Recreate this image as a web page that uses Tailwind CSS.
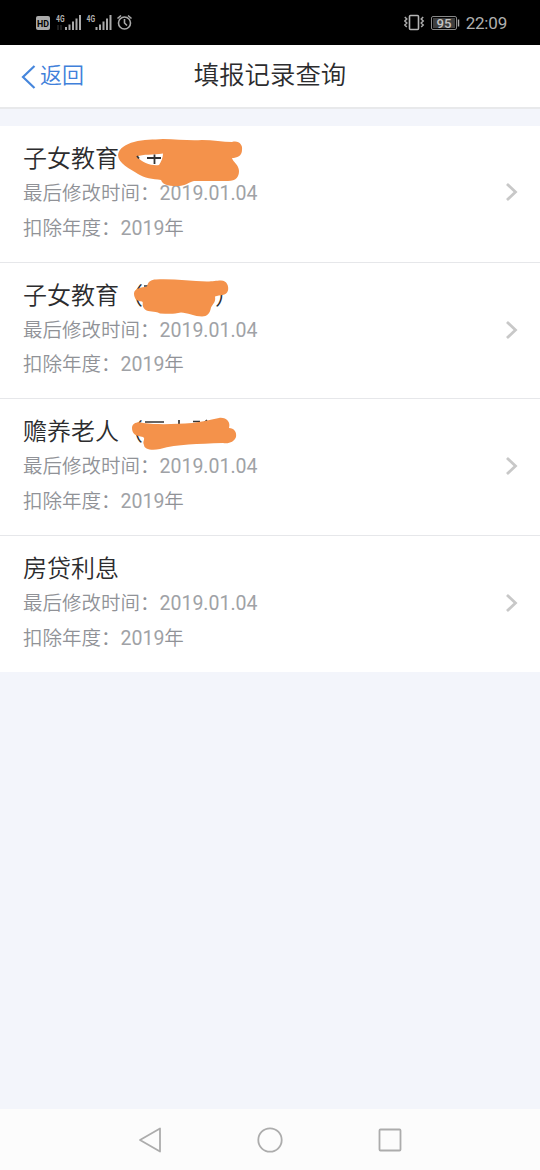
<!DOCTYPE html>
<html lang="zh-CN">
<head>
<meta charset="utf-8">
<title>填报记录查询</title>
<script src="https://cdn.jsdelivr.net/npm/@tailwindcss/browser@4"></script>
</head>
<body class="w-[540px] h-[1170px] overflow-hidden flex flex-col bg-[#f3f5fb] font-['Roboto','Noto_Sans_CJK_SC',sans-serif] text-[#2c2c2e]">
<div class="h-[45px] shrink-0 bg-black flex items-center justify-between pl-[35px] pr-[33px] text-[#b0b0b0]">
  <svg class="w-[100px] h-[45px]" viewBox="35 0 100 45" fill="none">
    <rect x="36" y="16" width="14" height="14" rx="2" fill="#aaa"/>
    <text x="37" y="26.600" font-size="9.500" font-weight="700" fill="#000" textLength="12" lengthAdjust="spacingAndGlyphs">HD</text>
    <text x="56" y="22" font-size="9.500" font-weight="700" fill="#b4b4b4" textLength="8.500" lengthAdjust="spacingAndGlyphs">4G</text>
    <path d="M58 25v5M61 25v5" stroke="#333" stroke-width="1.200"/>
    <path d="M66 27v3M69.500 24.500V30M73 21.500V30M76.500 18.500V30M80 15V30" stroke="#aaa" stroke-width="2"/>
    <text x="86.500" y="22" font-size="9.500" font-weight="700" fill="#b4b4b4" textLength="8.500" lengthAdjust="spacingAndGlyphs">4G</text>
    <path d="M96.500 27v3M100 24.500V30M103.500 21.500V30M107 18.500V30M110.500 15V30" stroke="#aaa" stroke-width="2"/>
    <g stroke="#aaa" stroke-width="1.600"><circle cx="124.500" cy="23" r="6"/><path d="M124.500 19v4l2.500 2.500M117.500 18.500l3.500-3M131.500 18.500l-3.500-3"/></g>
  </svg>
  <div class="flex items-center gap-[5px]">
    <svg class="w-[57px] h-[45px]" viewBox="404 0 57 45" fill="none">
      <rect x="409.500" y="15.500" width="9" height="14" rx="1" stroke="#b4b4b4" stroke-width="1.600"/>
      <path d="M404.800 17l2 2-2 2 2 2-2 2 2 2M423.200 17l-2 2 2 2-2 2 2 2-2 2" stroke="#aaa" stroke-width="1.500"/>
      <rect x="431.500" y="16.500" width="25" height="13" rx="1.500" stroke="#888"/>
      <rect x="433" y="18" width="22" height="10" fill="#3e3e3e"/>
      <path d="M458.500 19.500v7" stroke="#aaa" stroke-width="1.500"/>
      <text x="436.500" y="27.500" font-size="12.500" font-weight="500" fill="#c4c4c4" textLength="15" lengthAdjust="spacingAndGlyphs">95</text>
    </svg>
    <span class="text-[17px] leading-none tracking-[-0.2px] pt-px">22:09</span>
  </div>
</div>
<header class="h-[64px] shrink-0 bg-white border-b-2 border-[#e8e9eb] grid grid-cols-[1fr_auto_1fr] items-center">
  <div class="flex items-center pl-[21px] gap-1 text-[#4080da] text-[22px] font-[350]">
    <svg class="w-[15px] h-[25px]" viewBox="0 0 15 25" fill="none" stroke="#4686dc" stroke-width="2.200"><path d="M13.500 2L2 13L13.500 24"/></svg>
    <span class="leading-none">返回</span>
  </div>
  <h1 class="text-[25.400px] leading-none font-[350]">填报记录查询</h1>
</header>
<main class="mt-[17px] shrink-0 bg-white">
  <section class="relative h-[136.500px] border-b border-[#e6e7ea] flex items-center justify-between pl-[23px] pr-[22px]">
    <div><h2 class="text-[24px] leading-[36px] font-[350]">子女教育</h2><p class="text-[19.500px] leading-[34.500px] text-[#909297] font-[350]">最后修改时间：<span class="font-normal text-[#a0a2a6]">2019.01.04</span></p><p class="text-[19.500px] leading-[34.500px] text-[#909297] font-[350]">扣除年度：<span class="font-normal text-[#a0a2a6]">2019</span>年</p></div>
    <svg class="w-[13px] h-[20px] mb-[3px]" viewBox="0 0 13 20" fill="none" stroke="#c8c8c8" stroke-width="2.800"><path d="M2 2l8.500 8L2 18"/></svg>
    <svg class="absolute left-0 top-0 w-[270px] h-[136px]" viewBox="0 126 270 136" fill="none">
      <path fill="#f4924b" fill-rule="evenodd" d="M118 155C119 148 126 144 134 142C144 139 153 140 163 139C177 139 189 141 202 140C213 140 223 142 232 142C239 140 243 145 242 150C242 156 237 158 232 158C233 162 239 165 239 171C239 177 236 181 228 181H194C189 182 185 186 179 186C171 186 163 186 161 180C153 179 144 178 138 174C130 169 118 163 118 155ZM137 156.500C143 154 153 155 163 153.500C163 158 161 162 159 165C152 166 142 163 137 156.500Z"/>
      <path d="M147 158h14M154.500 154.500v9.500M137 156l2 2.500" stroke="#333" stroke-width="1.800"/>
    </svg>
  </section>
  <section class="relative h-[136.500px] border-b border-[#e6e7ea] flex items-center justify-between pl-[23px] pr-[22px]">
    <div><h2 class="text-[24px] leading-[36px] font-[350]">子女教育（<span class="inline-block w-[72px]"></span>）</h2><p class="text-[19.500px] leading-[34.500px] text-[#909297] font-[350]">最后修改时间：<span class="font-normal text-[#a0a2a6]">2019.01.04</span></p><p class="text-[19.500px] leading-[34.500px] text-[#909297] font-[350]">扣除年度：<span class="font-normal text-[#a0a2a6]">2019</span>年</p></div>
    <svg class="w-[13px] h-[20px]" viewBox="0 0 13 20" fill="none" stroke="#c8c8c8" stroke-width="2.800"><path d="M2 2l8.500 8L2 18"/></svg>
    <svg class="absolute left-0 top-0 w-[270px] h-[136px]" viewBox="0 262.500 270 136" fill="none">
      <path d="M144 285.500h4" stroke="#333" stroke-width="1.500"/>
      <path fill="#f4924b" d="M134 293C134 288 141 287 147 286C148 281 151 279 156 279C174 278 190 281 207 281C213 281 216 280 221 280C227 280 229 286 228 290C226 296 220 294 215 296C216 302 213 303 211 307C210 313 207 316 202 316C195 316 187 312 181 312C173 314 167 313 160 313C154 310 149 312 145 309C141 305 144 302 142 301C137 301 134 298 134 293Z"/>
    </svg>
  </section>
  <section class="relative h-[136.500px] border-b border-[#e6e7ea] flex items-center justify-between pl-[23px] pr-[22px]">
    <div><h2 class="text-[24px] leading-[36px] font-[350]">赡养老人（</h2><p class="text-[19.500px] leading-[34.500px] text-[#909297] font-[350]">最后修改时间：<span class="font-normal text-[#a0a2a6]">2019.01.04</span></p><p class="text-[19.500px] leading-[34.500px] text-[#909297] font-[350]">扣除年度：<span class="font-normal text-[#a0a2a6]">2019</span>年</p></div>
    <svg class="w-[13px] h-[20px] mb-px" viewBox="0 0 13 20" fill="none" stroke="#c8c8c8" stroke-width="2.800"><path d="M2 2l8.500 8L2 18"/></svg>
    <svg class="absolute left-0 top-0 w-[270px] h-[136px]" viewBox="0 399 270 136" fill="none">
      <path d="M145 422h19M179 420v6M193 421.500h7M203 424l4-4M204 422h6" stroke="#333" stroke-width="1.700"/>
      <path fill="#f4924b" d="M132 428C132 423 138 421 143 423C159 425 176 424 192 423C201 422 209 420 219 418C226 417 231 422 229 428C234 428 237 432 236 437C234 442 229 444 223 443C197 444 178 444 160 449C151 451 144 449 144 445C142 441 146 439 143 437C136 436 132 434 132 428Z"/>
    </svg>
  </section>
  <section class="h-[136.500px] flex items-center justify-between pl-[23px] pr-[22px]">
    <div><h2 class="text-[24px] leading-[36px] font-[350]">房贷利息</h2><p class="text-[19.500px] leading-[34.500px] text-[#909297] font-[350]">最后修改时间：<span class="font-normal text-[#a0a2a6]">2019.01.04</span></p><p class="text-[19.500px] leading-[34.500px] text-[#909297] font-[350]">扣除年度：<span class="font-normal text-[#a0a2a6]">2019</span>年</p></div>
    <svg class="w-[13px] h-[20px] mb-[2px]" viewBox="0 0 13 20" fill="none" stroke="#c8c8c8" stroke-width="2.800"><path d="M2 2l8.500 8L2 18"/></svg>
  </section>
</main>
<nav class="mt-auto h-[61px] shrink-0 bg-[#fcfcfc] flex justify-center items-center gap-[92px] text-[#acacac]">
  <svg class="w-7 h-7" viewBox="0 0 28 28" fill="none" stroke="currentColor" stroke-width="1.800" stroke-linejoin="round"><path d="M24 2.500v23L4 14Z"/></svg>
  <svg class="w-7 h-7" viewBox="0 0 28 28" fill="none" stroke="currentColor" stroke-width="1.800"><circle cx="14" cy="14" r="11.700"/></svg>
  <svg class="w-7 h-7" viewBox="0 0 28 28" fill="none" stroke="currentColor" stroke-width="1.800"><rect x="3.500" y="3.500" width="21" height="21" rx="1"/></svg>
</nav>
</body>
</html>
